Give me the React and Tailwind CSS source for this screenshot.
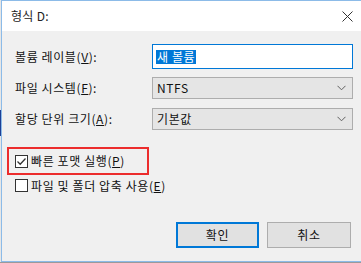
function Chevron() {
  return (
    <svg width="9" height="6" viewBox="0 0 9 6" className="shrink-0">
      <path d="M0.5 0.8 L4.5 4.8 L8.5 0.8" fill="none" stroke="#606060" strokeWidth="1" />
    </svg>
  );
}

function Combo({ value }) {
  return (
    <div className="ml-[150px] w-[201px] h-[22px] bg-[#e5e5e5] border border-[#adadad] flex items-center justify-between pl-[4px] pr-[6px] text-[12px] text-[#111]">
      <span>{value}</span>
      <Chevron />
    </div>
  );
}

function CheckBox({ checked }) {
  return (
    <div className="w-[13px] h-[13px] border border-[#333] bg-white flex items-center justify-center shrink-0">
      {checked && (
        <svg width="11" height="11" viewBox="0 0 11 11">
          <path d="M1.5 5.5 L4.2 8.2 L9.5 2.5" fill="none" stroke="#333" strokeWidth="1.3" />
        </svg>
      )}
    </div>
  );
}

export default function App() {
  const font = { fontFamily: '"Noto Sans CJK KR", "Noto Sans", sans-serif' };

  return (
    <div className="w-[361px] h-[263px] overflow-hidden flex flex-col bg-[#f0f0f0]" style={font}>
      <div className="flex h-[262px]">
        {/* sliver of whatever sits behind the dialog */}
        <div className="w-px flex flex-col bg-[#e6e6e6]">
          <div className="h-[110px]" />
          <div className="h-[26px] bg-[#1d3f95]" />
          <div className="flex-1" />
        </div>

        <div className="flex-1 flex flex-col border-t border-l border-b border-[#8cbbe8] bg-[#f0f0f0]">
          <div className="h-[30px] bg-white flex items-center justify-between pl-[9px] pr-[8px] text-[12px] text-[#222] tracking-[0.3px]">
            <span>형식 D:</span>
            <svg width="11" height="11" viewBox="0 0 11 11">
              <path d="M0.5 0.5 L10.5 10.5 M10.5 0.5 L0.5 10.5" stroke="#333" strokeWidth="1" />
            </svg>
          </div>

          <div className="flex flex-col text-[12px] text-[#111] tracking-[0.6px]">
            <div className="mt-[13px] flex items-center h-[25px]">
              <span className="w-[150px] pl-[13px] shrink-0">
                볼륨 레이블(<span className="underline">V</span>):
              </span>
              <div className="w-[201px] h-[25px] bg-white border border-[#0078d7] flex items-center pl-[3px]">
                <span className="bg-[#0078d7] text-white h-[14px] leading-[14px] px-px">새 볼륨</span>
              </div>
            </div>

            <div className="mt-[8px] flex items-center h-[22px] relative">
              <span className="absolute left-[13px]">
                파일 시스템(<span className="underline">F</span>):
              </span>
              <Combo value="NTFS" />
            </div>

            <div className="mt-[9px] flex items-center h-[22px] relative">
              <span className="absolute left-[13px]">
                할당 단위 크기(<span className="underline">A</span>):
              </span>
              <Combo value="기본값" />
            </div>

            <div className="mt-[17px] ml-[5px] w-[142px] h-[28px] border-2 border-[#ec2c2c] flex items-center pl-[6px] gap-[3px]">
              <CheckBox checked />
              <span>
                빠른 포맷 실행(<span className="underline">P</span>)
              </span>
            </div>

            <div className="mt-[3px] ml-[13px] h-[15px] flex items-center gap-[3px]">
              <CheckBox />
              <span>
                파일 및 폴더 압축 사용(<span className="underline">E</span>)
              </span>
            </div>

            <div className="mt-[29px] flex gap-[8px] pl-[174px]">
              <button className="w-[83px] h-[26px] bg-[#e1e1e1] border-2 border-[#0078d7] text-[12px] text-[#111]">확인</button>
              <button className="w-[84px] h-[26px] bg-[#e1e1e1] border border-[#adadad] text-[12px] text-[#111]">취소</button>
            </div>
          </div>
        </div>
      </div>
      <div className="h-px bg-[#9a9a9a]" />
    </div>
  );
}
